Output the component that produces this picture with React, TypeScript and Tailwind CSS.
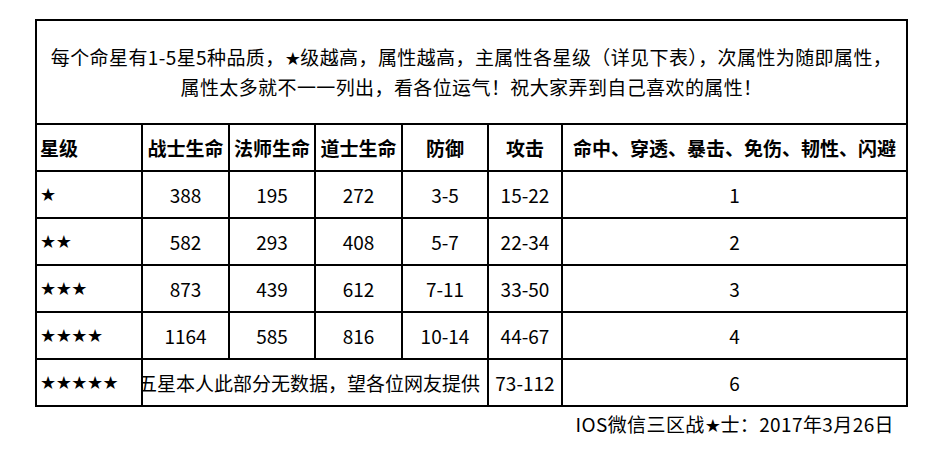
import React from "react";

function Star({ n }: { n: number }) {
  return (
    <span className="font-['DejaVu_Sans'] text-[18px] tracking-[-0.5px]">{"★".repeat(n)}</span>
  );
}

const rows: [number, string, string, string, string, string, string][] = [
  [1, "388", "195", "272", "3-5", "15-22", "1"],
  [2, "582", "293", "408", "5-7", "22-34", "2"],
  [3, "873", "439", "612", "7-11", "33-50", "3"],
  [4, "1164", "585", "816", "10-14", "44-67", "4"],
];

export default function App() {
  const cell = "bg-white flex items-center justify-center h-[45px] whitespace-nowrap";
  const hcell = "bg-white flex items-center justify-center h-[45px] whitespace-nowrap font-bold";
  return (
    <div className="w-[937px] h-[471px] bg-white text-black text-[19px] leading-[28px] font-['Noto_Sans_CJK_SC',sans-serif]">
      <div className="pt-[19px] pl-[35px]">
        <div className="grid w-[873px] grid-cols-[104px_85px_84px_85px_84px_72px_343px] gap-[2px] bg-black p-[2px]">
          <div className="col-span-7 bg-white h-[102px] flex items-center justify-center text-center whitespace-nowrap tracking-[0.4px]">
            <div>
              每个命星有1-5星5种品质，<Star n={1} />级越高，属性越高，主属性各星级（详见下表），次属性为随即属性，
              <br />
              属性太多就不一一列出，看各位运气！祝大家弄到自己喜欢的属性！
            </div>
          </div>
          <div className="bg-white flex items-center h-[45px] pl-[3px] font-bold">星级</div>
          <div className={hcell}>战士生命</div>
          <div className={hcell}>法师生命</div>
          <div className={hcell}>道士生命</div>
          <div className={hcell}>防御</div>
          <div className={hcell}>攻击</div>
          <div className={hcell}>命中、穿透、暴击、免伤、韧性、闪避</div>
          {rows.map((r) => (
            <React.Fragment key={r[0]}>
              <div className="bg-white flex items-center h-[45px] pl-[3px]">
                <Star n={r[0]} />
              </div>
              <div className={cell}>{r[1]}</div>
              <div className={cell}>{r[2]}</div>
              <div className={cell}>{r[3]}</div>
              <div className={cell}>{r[4]}</div>
              <div className={cell}>{r[5]}</div>
              <div className={cell}>{r[6]}</div>
            </React.Fragment>
          ))}
          <div className="relative z-10 bg-white flex items-center h-[45px] pl-[3px] border-r-[2px] border-black -mr-[2px]">
            <Star n={5} />
          </div>
          <div className="col-span-4 bg-white flex items-center justify-center h-[45px] whitespace-nowrap overflow-visible">
            <span className="-ml-[12px]">五星本人此部分无数据，望各位网友提供</span>
          </div>
          <div className={cell}>73-112</div>
          <div className={cell}>6</div>
        </div>
        <div className="w-[873px] flex justify-end pr-[14px] mt-[3px] whitespace-nowrap tracking-[0.4px]">
          <span>
            IOS微信三区战<Star n={1} />士：2017年3月26日
          </span>
        </div>
      </div>
    </div>
  );
}
